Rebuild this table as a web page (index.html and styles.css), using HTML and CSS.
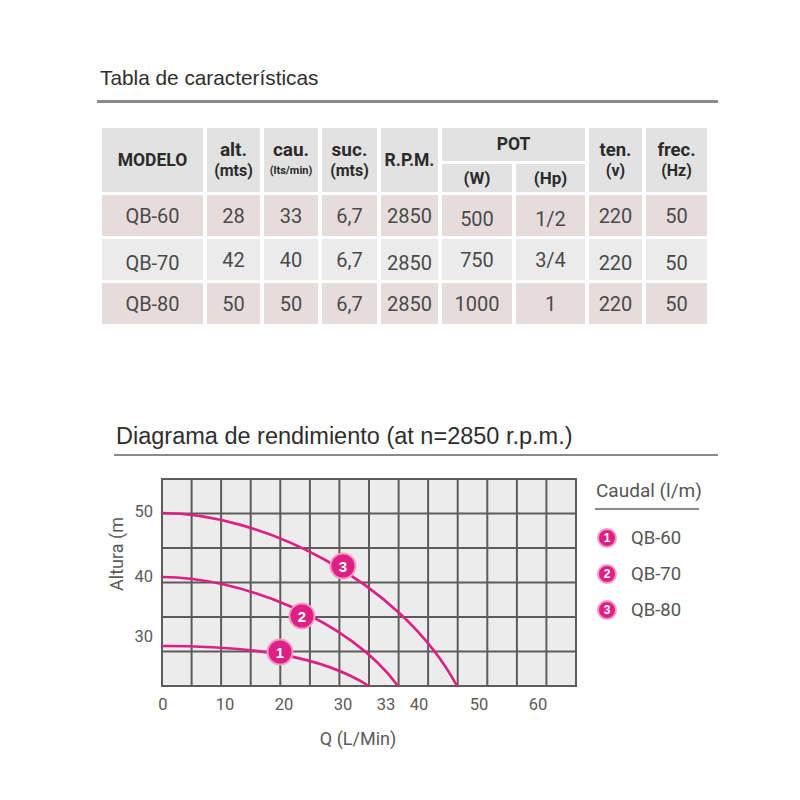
FILE: index.html
```html
<!DOCTYPE html>
<html lang="es">
<head>
<meta charset="utf-8">
<title>Tabla de características</title>
<link rel="stylesheet" href="styles.css">
</head>
<body>
<main class="page">
  <section class="specs">
    <h2 class="section-title title-table">Tabla de características</h2>
    <table class="spec-table">
      <colgroup>
        <col class="c-model"><col class="c-alt"><col class="c-cau"><col class="c-suc"><col class="c-rpm"><col class="c-w"><col class="c-hp"><col class="c-ten"><col class="c-frec">
      </colgroup>
      <thead>
        <tr class="head-top">
          <th rowspan="2" class="h-single h-model">MODELO</th>
          <th rowspan="2"><span class="h-main">alt.</span><span class="h-unit">(mts)</span></th>
          <th rowspan="2"><span class="h-main">cau.</span><span class="h-unit h-small">(lts/min)</span></th>
          <th rowspan="2"><span class="h-main">suc.</span><span class="h-unit">(mts)</span></th>
          <th rowspan="2" class="h-single h-rpm">R.P.M.</th>
          <th colspan="2" class="h-pot">POT</th>
          <th rowspan="2" class="h-tight"><span class="h-main">ten.</span><span class="h-unit">(v)</span></th>
          <th rowspan="2" class="h-tight"><span class="h-main">frec.</span><span class="h-unit">(Hz)</span></th>
        </tr>
        <tr class="head-sub">
          <th>(W)</th>
          <th>(Hp)</th>
        </tr>
      </thead>
      <tbody>
        <tr class="row-a">
          <td>QB-60</td><td>28</td><td>33</td><td>6,7</td><td>2850</td><td class="low">500</td><td class="low">1/2</td><td>220</td><td>50</td>
        </tr>
        <tr class="row-b">
          <td class="low">QB-70</td><td>42</td><td>40</td><td>6,7</td><td class="low">2850</td><td>750</td><td>3/4</td><td class="low">220</td><td class="low">50</td>
        </tr>
        <tr class="row-a">
          <td>QB-80</td><td>50</td><td>50</td><td>6,7</td><td>2850</td><td>1000</td><td>1</td><td>220</td><td>50</td>
        </tr>
      </tbody>
    </table>
  </section>

  <section class="performance">
    <h2 class="section-title title-chart">Diagrama de rendimiento (at n=2850 r.p.m.)</h2>
    <div class="chart-row">
      <svg class="chart" width="490" height="290" viewBox="97 468 490 290" xmlns="http://www.w3.org/2000/svg">
        <rect x="162" y="479" width="414" height="207" fill="#ececec"/>
        <g class="grid" stroke="#5c5c5c" stroke-width="2">
          <line x1="162" y1="479" x2="162" y2="686"/>
          <line x1="191.6" y1="479" x2="191.6" y2="686"/>
          <line x1="221.1" y1="479" x2="221.1" y2="686"/>
          <line x1="250.7" y1="479" x2="250.7" y2="686"/>
          <line x1="280.3" y1="479" x2="280.3" y2="686"/>
          <line x1="309.9" y1="479" x2="309.9" y2="686"/>
          <line x1="339.4" y1="479" x2="339.4" y2="686"/>
          <line x1="369" y1="479" x2="369" y2="686"/>
          <line x1="398.6" y1="479" x2="398.6" y2="686"/>
          <line x1="428.1" y1="479" x2="428.1" y2="686"/>
          <line x1="457.7" y1="479" x2="457.7" y2="686"/>
          <line x1="487.3" y1="479" x2="487.3" y2="686"/>
          <line x1="516.9" y1="479" x2="516.9" y2="686"/>
          <line x1="546.4" y1="479" x2="546.4" y2="686"/>
          <line x1="576" y1="479" x2="576" y2="686"/>
          <line x1="161" y1="479" x2="577" y2="479"/>
          <line x1="161" y1="513.5" x2="577" y2="513.5"/>
          <line x1="161" y1="548" x2="577" y2="548"/>
          <line x1="161" y1="582.5" x2="577" y2="582.5"/>
          <line x1="161" y1="617" x2="577" y2="617"/>
          <line x1="161" y1="651.5" x2="577" y2="651.5"/>
          <line x1="161" y1="686" x2="577" y2="686"/>
        </g>
        <g class="curves" fill="none" stroke="#de1f84" stroke-width="2.6">
          <path d="M162 646 C 250 646 320 655 369 686"/>
          <path d="M162 577 C 240 577 350 620 398 686"/>
          <path d="M162 513 C 260 513 400 580 457 686"/>
        </g>
        <g class="markers">
          <circle cx="280" cy="652" r="12.5" fill="#de1f84" stroke="#f29ac6" stroke-width="2"/>
          <text class="marker-num" x="280" y="657.5">1</text>
          <circle cx="302" cy="616" r="12.5" fill="#de1f84" stroke="#f29ac6" stroke-width="2"/>
          <text class="marker-num" x="302" y="621.5">2</text>
          <circle cx="343" cy="566" r="12.5" fill="#de1f84" stroke="#f29ac6" stroke-width="2"/>
          <text class="marker-num" x="343" y="571.5">3</text>
        </g>
        <g class="axis-y">
          <text x="153" y="517">50</text>
          <text x="153" y="582">40</text>
          <text x="153" y="642">30</text>
        </g>
        <text class="axis-title" transform="translate(123 554) rotate(-90)">Altura (m</text>
        <g class="axis-x">
          <text x="163" y="710">0</text>
          <text x="225" y="710">10</text>
          <text x="284" y="710">20</text>
          <text x="343" y="710">30</text>
          <text x="386" y="710">33</text>
          <text x="419" y="710">40</text>
          <text x="479" y="710">50</text>
          <text x="538" y="710">60</text>
        </g>
        <text class="axis-title" x="358" y="745">Q (L/Min)</text>
      </svg>

      <aside class="legend">
        <h3 class="legend-title">Caudal (l/m)</h3>
        <ul class="legend-list">
          <li class="legend-item"><span class="legend-dot">1</span>QB-60</li>
          <li class="legend-item"><span class="legend-dot">2</span>QB-70</li>
          <li class="legend-item"><span class="legend-dot">3</span>QB-80</li>
        </ul>
      </aside>
    </div>
  </section>
</main>
</body>
</html>
```

FILE: styles.css
```css
* {
  box-sizing: border-box;
}

html, body {
  margin: 0;
  padding: 0;
  background: #ffffff;
}

body {
  font-family: "Liberation Sans", Arial, sans-serif;
  color: #333333;
}

.page {
  width: 621px;
  margin: 0 0 0 97px;
  padding-top: 66px;
}

.section-title {
  margin: 0;
  font-weight: normal;
  color: #2e2e2e;
  border-bottom: 3px solid #8a8a8a;
  white-space: nowrap;
}

.title-table {
  font-size: 20.8px;
  line-height: 24px;
  padding: 0 0 10px 3px;
}

.title-chart {
  font-size: 23.5px;
  line-height: 26px;
  margin-left: 17px;
  padding: 0 0 5px 2px;
  border-bottom-width: 2px;
}

/* ---------- table ---------- */

.spec-table {
  border-collapse: separate;
  border-spacing: 4px 3px;
  table-layout: fixed;
  width: 613px;
  margin: 22px 0 0 1px;
  font-family: Roboto, "Liberation Sans", sans-serif;
}

.c-model { width: 101px; }
.c-alt { width: 53px; }
.c-cau { width: 54px; }
.c-suc { width: 55px; }
.c-rpm { width: 57px; }
.c-w { width: 70px; }
.c-hp { width: 69px; }
.c-ten { width: 53px; }
.c-frec { width: 61px; }

.spec-table th,
.spec-table td {
  padding: 0;
  text-align: center;
  vertical-align: middle;
}

.spec-table th {
  background: #e2e2e2;
  color: #2b2b2b;
  font-weight: bold;
  font-size: 17px;
  line-height: 20px;
}

.head-top {
  height: 33px;
}

.head-sub {
  height: 28px;
}

.spec-table .h-single {
  font-size: 17.5px;
}

.h-model {
  padding-top: 5px;
}

.h-rpm {
  padding-top: 12px;
}

.h-main,
.h-unit {
  display: block;
}

.h-main {
  font-size: 19px;
  line-height: 22px;
}

.h-unit {
  font-size: 16px;
  line-height: 20px;
}

.h-small {
  font-size: 11px;
}

.h-tight .h-main {
  font-size: 18.5px;
  line-height: 21px;
}

.h-tight .h-unit {
  font-size: 16px;
  line-height: 19px;
}

.spec-table .h-pot {
  font-size: 17.5px;
  vertical-align: top;
  padding-top: 6px;
}

.spec-table td {
  height: 41px;
  font-size: 20px;
  color: #4a4a4a;
}

.spec-table td.low {
  padding-top: 6px;
}

.row-a td {
  background: #e7dcdc;
}

.row-b td {
  background: #ebebeb;
}

/* ---------- chart ---------- */

.performance {
  margin-top: 96px;
}

.chart-row {
  display: flex;
  align-items: flex-start;
  margin-top: 12px;
}

.chart {
  display: block;
  flex: none;
}

.chart text {
  font-family: Roboto, "Liberation Sans", sans-serif;
  fill: #5a5a5a;
}

.axis-y text {
  font-size: 16.5px;
  text-anchor: end;
}

.axis-x text {
  font-size: 16.5px;
  text-anchor: middle;
}

.axis-title {
  font-size: 18px;
  text-anchor: middle;
}

.chart .marker-num {
  font-family: "Liberation Sans", Arial, sans-serif;
  font-weight: bold;
  font-size: 15px;
  fill: #ffffff;
  text-anchor: middle;
}

/* ---------- legend ---------- */

.legend {
  margin: 12px 0 0 8px;
  width: 104px;
  font-family: Roboto, "Liberation Sans", sans-serif;
  color: #555555;
  white-space: nowrap;
}

.legend-title {
  margin: 0;
  font-weight: normal;
  font-size: 19px;
  line-height: 22px;
  padding: 0 0 6px 1px;
  border-bottom: 2px solid #8a8a8a;
}

.legend-list {
  list-style: none;
  margin: 17px 0 0 0;
  padding: 0;
  display: flex;
  flex-direction: column;
  gap: 14px;
}

.legend-item {
  display: flex;
  align-items: center;
  gap: 14px;
  font-size: 18.5px;
  line-height: 22px;
}

.legend-dot {
  width: 20px;
  height: 20px;
  border-radius: 50%;
  background: #de1f84;
  border: 2px solid #f29ac6;
  color: #ffffff;
  font-family: "Liberation Sans", Arial, sans-serif;
  font-weight: bold;
  font-size: 12px;
  line-height: 16px;
  text-align: center;
  margin-left: 2px;
}
```
